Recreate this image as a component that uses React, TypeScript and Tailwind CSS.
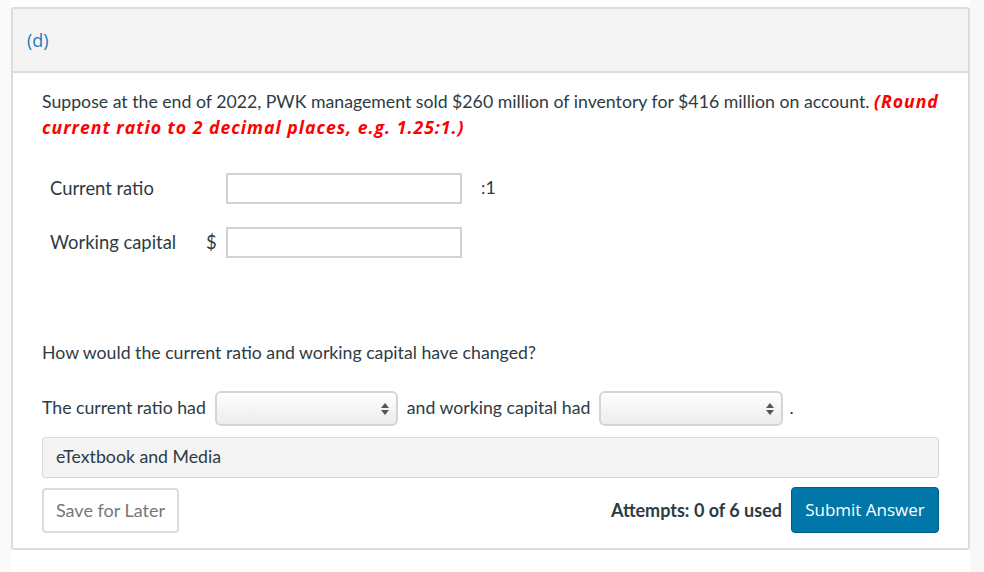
import React from "react";

const lato = { fontFamily: "Lato, 'Open Sans', sans-serif" };

function SelectBox({ width }: { width: string }) {
  return (
    <div
      className={`${width} relative h-[35px] rounded-[6px] border-2 border-[#d4d4d4] bg-gradient-to-b from-white to-[#ececec]`}
    >
      <svg
        className="absolute right-[7px] top-[10px]"
        width="8"
        height="12"
        viewBox="0 0 8 12"
      >
        <path d="M4 0 L8 5 L0 5 Z" fill="#555" />
        <path d="M4 12 L8 7 L0 7 Z" fill="#555" />
      </svg>
    </div>
  );
}

function InputRow({
  label,
  prefix,
  suffix,
}: {
  label: string;
  prefix?: string;
  suffix?: string;
}) {
  return (
    <div className="flex h-[31px] items-center pl-[8px] text-[18.4px]">
      <span className="w-[148px]">{label}</span>
      <span className="w-[28px] pl-[8px]">{prefix}</span>
      <div className="h-[31px] w-[236px] border-2 border-[#d2d2d2] bg-white" />
      {suffix && <span className="pl-[19px] text-[17.6px]">{suffix}</span>}
    </div>
  );
}

export default function App() {
  return (
    <div
      className="flex h-[572px] w-[984px] bg-white text-[17.7px] text-[#2d3b45]"
      style={lato}
    >
      <div className="w-[11px] bg-[#fafafa]" />
      <div className="w-[959px] pt-[7px]">
        <div className="rounded-[3px] border-2 border-[#dcdcdc] bg-white">
          <div className="flex h-[64px] items-center border-b-2 border-[#dcdcdc] bg-[#f4f4f4] pl-[14px]">
            <span
              className="text-[18px] text-[#1b7bbf]"
              style={{ fontFamily: "'Open Sans', sans-serif" }}
            >
              (d)
            </span>
          </div>

          <div className="px-[29px] pb-[15px] pt-[16px]">
            <p className="mr-[-14px] leading-[26px]">
              Suppose at the end of 2022, PWK management sold $260 million of
              inventory for $416 million on account.{" "}
              <span
                className="font-bold italic leading-[24px] tracking-[0.055em] text-[#f00]"
                style={{ fontFamily: "'Open Sans', sans-serif" }}
              >
                (Round current ratio to 2 decimal places, e.g. 1.25:1.)
              </span>
            </p>

            <div className="mt-[32px] flex flex-col gap-[23px]">
              <InputRow label="Current ratio" suffix=":1" />
              <InputRow label="Working capital" prefix="$" />
            </div>

            <p className="mt-[82px] leading-[26px]">
              How would the current ratio and working capital have changed?
            </p>

            <div className="mt-[25px] flex items-center">
              <span className="pr-[9px]">The current ratio had</span>
              <SelectBox width="w-[183px]" />
              <span className="px-[9px]">and working capital had</span>
              <SelectBox width="w-[184px]" />
              <span className="pl-[6px]">.</span>
            </div>

            <div className="mt-[11px] flex h-[41px] items-center rounded-[3px] border border-[#d8d8d8] bg-[#f4f4f4] pl-[13px]">
              eTextbook and Media
            </div>

            <div className="mt-[9px] flex items-center justify-between">
              <button className="h-[45px] w-[137px] rounded-[4px] border-2 border-[#dcdcdc] bg-white text-[18px] text-[#777]">
                Save for Later
              </button>
              <div className="flex items-center gap-[9px]">
                <span className="text-[18px] font-bold">Attempts: 0 of 6 used</span>
                <button
                  className="h-[46px] w-[148px] rounded-[4px] border border-[#005f86] bg-[#0077a8] text-[17px] text-white"
                  style={{ fontFamily: "'Open Sans', sans-serif" }}
                >
                  Submit Answer
                </button>
              </div>
            </div>
          </div>
        </div>
      </div>
      <div className="flex-1 bg-[#f8f8f8]" />
    </div>
  );
}
